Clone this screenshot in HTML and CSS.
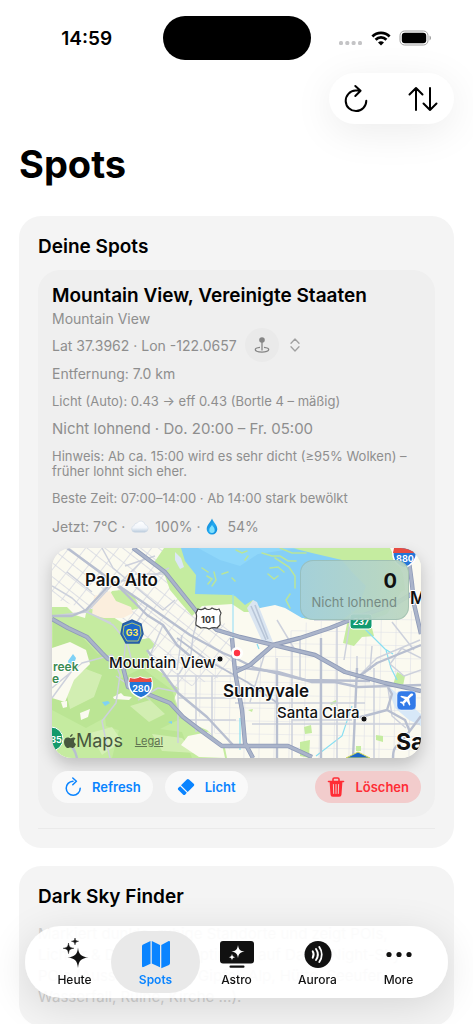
FILE: index.html
```html
<!DOCTYPE html>
<html lang="de">
<head>
    <meta charset="UTF-8">
    <meta name="viewport" content="width=device-width, initial-scale=1.0">
    <title>Spots</title>
    <link rel="stylesheet" href="styles.css">
</head>
<body>
    <div class="app">
        <header class="statusbar">
            <div class="clock">14:59</div>
            <div class="island"></div>
            <div class="status-icons">
                <svg class="signal" viewBox="0 0 24 6" width="24" height="6" fill="#c4c4c6">
                    <rect x="0" y="1" width="4" height="4" rx="1.500"/>
                    <rect x="6.300" y="1" width="4" height="4" rx="1.500"/>
                    <rect x="12.600" y="1" width="4" height="4" rx="1.500"/>
                    <rect x="19" y="1" width="4" height="4" rx="1.500"/>
                </svg>
                <svg viewBox="0 0 20 15" width="20" height="15" fill="none" stroke="#000" stroke-width="2.8">
                    <path d="M1.4 5.4a12.2 12.2 0 0 1 17.2 0"/>
                    <path d="M4.6 8.7a7.6 7.6 0 0 1 10.8 0"/>
                    <path d="M10 14.6 7 11.6a4.3 4.3 0 0 1 6 0z" fill="#000" stroke="none"/>
                </svg>
                <svg viewBox="0 0 33 16" width="33" height="16">
                    <rect x="1" y="1" width="28" height="14" rx="4.5" fill="none" stroke="#a0a0a0"/>
                    <rect x="2.8" y="2.8" width="24.4" height="10.4" rx="3" fill="#000"/>
                    <path d="M30.5 5.6c2 .8 2 4 0 4.8z" fill="#a0a0a0"/>
                </svg>
            </div>
        </header>

        <div class="toolbar">
            <div class="toolbar-pill">
                <button class="icon-btn" aria-label="Neu laden">
                    <svg viewBox="0 0 28 30" width="28" height="30" class="line">
                        <path d="M13.5 6.5A10.3 10.3 0 1 0 24.3 16.8M13.3 2l5.3 4.7-5.3 5.3M18 6.6h-4.5"/>
                    </svg>
                </button>
                <button class="icon-btn" aria-label="Sortieren">
                    <svg viewBox="0 0 32 26" width="32" height="26" class="line">
                        <path d="M9 24V2M2.500 8.500 9 2l6.500 6.500M23 2v22M16.500 17.500 23 24l6.500-6.500"/>
                    </svg>
                </button>
            </div>
        </div>

        <h1>Spots</h1>

        <main>
            <section class="card">
                <h2>Deine Spots</h2>
                <article class="spot">
                    <h3>Mountain View, Vereinigte Staaten</h3>
                    <p class="place">Mountain View</p>
                    <div class="coords">
                        <span>Lat 37.3962 · Lon -122.0657</span>
                        <button class="pin-btn" aria-label="Karte wählen">
                            <span class="pin-circle">
                                <svg viewBox="0 0 16 18" width="16" height="18" fill="none" stroke="#858585" stroke-width="1.300">
                                    <circle cx="8" cy="4" r="2.800" fill="#858585" stroke="none"/>
                                    <path d="M8 6v8.500"/>
                                    <path d="M6 11.300c-3 .3-4.700 1.200-4.700 2.300 0 1.500 3 2.500 6.700 2.500s6.700-1 6.700-2.500c0-1.100-1.700-2-4.700-2.300"/>
                                </svg>
                            </span>
                            <svg viewBox="0 0 10 14" width="10" height="14" fill="none" stroke="#a0a0a0" stroke-width="1.300" stroke-linecap="round" stroke-linejoin="round">
                                <path d="M1 5.200 5 1l4 4.200M1 8.800 5 13l4-4.200"/>
                            </svg>
                        </button>
                    </div>
                    <p class="distance">Entfernung: 7.0 km</p>
                    <p class="small">Licht (Auto): 0.43 → eff 0.43 (Bortle 4 – mäßig)</p>
                    <p class="rating">Nicht lohnend · Do. 20:00 – Fr. 05:00</p>
                    <p class="small">Hinweis: Ab ca. 15:00 wird es sehr dicht (≥95% Wolken) – früher lohnt sich eher.</p>
                    <p class="small">Beste Zeit: 07:00–14:00 · Ab 14:00 stark bewölkt</p>
                    <p class="now">
                        <span>Jetzt: 7°C ·</span>
                        <svg viewBox="0 0 18 13" width="18" height="13">
                            <defs>
                                <linearGradient id="cloud" x1="0" y1="0" x2="0" y2="1">
                                    <stop offset="0" stop-color="#fff"/>
                                    <stop offset=".6" stop-color="#f1f5fa"/>
                                    <stop offset="1" stop-color="#b9cadc"/>
                                </linearGradient>
                            </defs>
                            <path d="M4 12.300a3.400 3.400 0 0 1-.8-6.700A3 3 0 0 1 6.200 3 4.300 4.300 0 0 1 14 4.600a3.900 3.900 0 0 1-.4 7.700z" fill="url(#cloud)" stroke="#c9d5e2" stroke-width=".5"/>
                        </svg>
                        <span>100% ·</span>
                        <svg class="drop" viewBox="0 0 12 17" width="12" height="17">
                            <defs>
                                <linearGradient id="drop" x1="0" y1="0" x2="1" y2="1">
                                    <stop offset="0" stop-color="#0a76c4"/>
                                    <stop offset=".5" stop-color="#22aaf2"/>
                                    <stop offset="1" stop-color="#0c86d6"/>
                                </linearGradient>
                            </defs>
                            <path d="M6 .5c1.500 4 5.300 6.500 5.300 10.700A5.300 5.300 0 0 1 .7 11.200C.7 7 4.500 4.500 6 .5z" fill="url(#drop)"/>
                            <path d="M6 7c1.500 2.200 2.700 3 2.700 5.200a2.700 2.700 0 0 1-5.400 0C3.300 10 4.500 9.200 6 7z" fill="#7fe0fd"/>
                        </svg>
                        <span>54%</span>
                    </p>

                    <div class="map">
                        <svg class="map-canvas" viewBox="0 0 369 210" preserveAspectRatio="xMidYMid slice">
                            <defs>
                                <pattern id="grid-diag" width="13" height="11" patternUnits="userSpaceOnUse" patternTransform="rotate(38)">
                                    <path d="M0 0H13M0 0V11" stroke="#d3d6e1" stroke-width="1.400" fill="none"/>
                                </pattern>
                                <pattern id="grid" width="15" height="13" patternUnits="userSpaceOnUse" patternTransform="rotate(1)">
                                    <path d="M0 0H15M0 0V13" stroke="#dddfe7" stroke-width="1.200" fill="none"/>
                                </pattern>
                            </defs>
                            <rect width="369" height="210" fill="#fbfaf0"/>
                            <path d="M0 0H110L183 88V125L126 142 90 100 30 60 0 50z" fill="url(#grid-diag)"/>
                            <path d="M110 100 183 122 250 75 369 62V210H185L126 145z" fill="url(#grid)"/>

                            <!-- parks and marsh -->
                            <g fill="#c5eca0">
                                <path d="M112 0h257v8l-8 30-12 6-14 22-22 8-60-3-22-15-20 2-9 6-10 0-12-8-30 2-10 10-12-14-10-12-5-14-12-12z"/>
                                <path d="M0 59l15 0 8 8 10 3 2-10 18 4 16 10 9 9 8 9 11-2 7 8-9 5 6 16 12 8 5 9 9 4-5 11 5 14 16 12 12 5 18 18 2 10H0z"/>
                                <path d="M60 43l10-1 12 6 6 12-12 3-14-8-6-6z"/>
                                <path d="M296 70l12 6 12 4 2 8-12 1-8 9-11-3 3-14z"/>
                                <path d="M345 124l8 4-2 10-10-1zM252 179l7-2 1 8-7 1zM248 194l10-2-1 18-9-2zM324 187l7 1 0 6-7-2zM304 198l5 0v5h-5z"/>
                                <path d="M278 155l6-3 1 3-6 2zM196 162l5-1-1 3z"/>
                            </g>
                            <path d="M338 0h31v60l-14-4-4-30z" fill="#fbfaf0"/>
                            <g fill="#b4e28d" opacity=".6">
                                <path d="M1 70l30 20 15 16 20 8 4 26-14 28-22 12-34-18zM50 140l40-20 30 22 10 28-40 20-36-12z"/>
                                <path d="M70 170l30 10 30 4 10 26H60z"/>
                            </g>
                            <g fill="#dcf2bf" opacity=".7">
                                <path d="M12 135l22-14 16 6-8 22-24 12zM78 158l20-6 15 14-16 8zM38 185l22-6 10 14-20 14zM100 186l30 4 14 15-34-2z"/>
                            </g>
                            <path d="M0 100l18-6 16 8 4 14-16 16-9 22-13-4z" fill="#fbfaf0"/>
                            <path d="M61 149l8-4 3 3 8 1-3 3-15-1zM28 165l10-4-2 8-7 3zM9 154l6-1 0 6-4 1zM136 188l20-4 14 12 3 14-26-1-18-12z" fill="#fbfaf0"/>
                            <path d="M42 48l16-5 6 10 15 6 2 6-10 5-19 0-12-3z" fill="#fbeedd"/>

                            <!-- bay -->
                            <path d="M129 0l4 13 11 14-1 19 37 1 3 1 10 9 8-5 7 8 15-3 10 3 17 10 40 2 16-12 8-22-14-14-10-12-30-7-20-5z" fill="#85cff7"/>
                            <path d="M146 0h100l-40 6-18 12-20-6z" fill="#8fd7fa"/>
                            <g fill="none" stroke="#b9e59a" stroke-width="1.500" stroke-linecap="round">
                                <path d="M150 20l6 4M162 24l2 8-4 6M170 26l6-2M155 28l5 3-4 5M184 2l6 3 5-2M193 12l3-4M210 5l10 3 8 0 8 5 8 0M223 10l14 9 6 9 0 12M218 20l8-1 6 5M216 26l6 5 4-3M180 30l3 3M238 46l-4 6 4 8M228 0l12 5 14 0"/>
                            </g>
                            <path d="M181 46V90" stroke="#8fdcf7" stroke-width="1"/>
                            <path d="M16 113l5-7 3 4-2 6-5 3zM50 154l6-1 2 2-5 3zM116 174l4-1 0 3z" fill="#7fd2f6"/>
                            <g fill="none" stroke="#88dff2" stroke-width="1.200">
                                <path d="M300 158l-10 30-26 20M188 170l0 32M309 77l24 24 8 5M334 102l5 18 6 12M205 96l2 5"/>
                            </g>

                            <!-- airfields -->
                            <path d="M195 60l6-8 4 2 16 40-11-1z" fill="#dae5f1"/>
                            <path d="M199 58l15 34M203 57l13 34" stroke="#b9c6d8" stroke-width="1.600"/>
                            <path d="M335 137l34 29v12l-12-6-14-12z" fill="#d7e8f8"/>
                            <path d="M123 4l6 6 3 9-4 2-5-9z" fill="#dce7f5"/>

                            <!-- streets -->
                            <g fill="none" stroke="#cdd1dc" stroke-width="1.500" stroke-linejoin="round">
                                <path d="M0 38l20 12 15 14 26 13 14 17 4 16M35 64l26-28M0 68l35-4 24 11M15 24l25 20M28 10l32 24M61 34l36-4 20-10"/>
                                <path d="M50 0l11 20 50 42 12-10M95 8l-30 30M73 18l30-10M83 26l30 0M96 57l-22 34-2 20M111 77l-12 28M130 87l-5 35M147 68l-6 20-2 18-12 20"/>
                                <path d="M0 140l30-25 30-8 8 20-4 28-14 18 4 20 4 17M22 120l-22 30M86 152l20-12 20 4M64 128l34 24"/>
                                <path d="M126 125v70M144 128v56M160 128v64M110 128h74M126 150h58M132 172h52"/>
                                <path d="M225 110v100M212 108l-14 46M240 98v112M248 90v40M285 76v134M322 120v90M336 140l4 28 14 12M200 176h168M183 155h130M240 172h60M305 108v20M262 72h30M225 72l18 30"/>
                                <path d="M305 130l20-20 43-18M320 98l-2 24M350 100l-12 16 14 12 17-6M340 74l22 28M369 110l-20-10M300 62l-8 50"/>
                            </g>
                            <g fill="none" stroke="#b8bfd0" stroke-width="2.400" stroke-linejoin="round">
                                <path d="M15 0l33 24 20 16 27 27 16 10 14 20 26 22"/>
                                <path d="M61 34l34 23 43 30 33 18 12 5 20 10 50 12 65 1"/>
                                <path d="M95 102l31 43 29 24 26 28"/>
                                <path d="M125 90l30 22 40 22 32 22" stroke-width="1.800"/>
                                <path d="M183 119l43 5 34 10h23l23 5 63-2M269 90v120M305 120l-4 90M225 124v86M305 170l30-8 5-16-7-12M335 162l18 10 5 12M341 210c0-14 6-12 10-18l18-24M305 130l20-15 44-18"/>
                                <path d="M0 68l20 0 14-6 26-28M16 196c6 2 8 10 9 14"/>
                            </g>
                            <g fill="none" stroke="#8f9bb8" stroke-width="4.400" stroke-linejoin="round">
                                <path d="M81 0l32 24 32 40 20 18 23 7 75 18 30 17 40 11 36 8"/>
                                <path d="M183 124l15-7 23-20 27-7 30-10 25-10 40-14 20-12"/>
                                <path d="M180 90l3 34 7 38 3 33 8 15"/>
                                <path d="M0 71l16 9 19 9 15 16 6 6 14 4 6 24 22 8 20 8 13 14 17 13 22 16h66l24 11"/>
                                <path d="M356 6l4 30 2 20 7 30"/>
                            </g>
                            <g fill="none" stroke="#aab4ca" stroke-width="2.800" stroke-linejoin="round">
                                <path d="M81 0l32 24 32 40 20 18 23 7 75 18 30 17 40 11 36 8"/>
                                <path d="M183 124l15-7 23-20 27-7 30-10 25-10 40-14 20-12"/>
                                <path d="M180 90l3 34 7 38 3 33 8 15"/>
                                <path d="M0 71l16 9 19 9 15 16 6 6 14 4 6 24 22 8 20 8 13 14 17 13 22 16h66l24 11"/>
                                <path d="M356 6l4 30 2 20 7 30"/>
                            </g>

                            <!-- route shields -->
                            <g class="shield">
                                <path d="M146 61c3 1 5 1 7-1 2 2 5 2 7 0 3 2 5 2 7 1l2 4c-3 5 0 8-1 12l-3 3c-4-1-6 0-8 1-2-1-4-2-8-1l-5-3c-1-4 2-7 0-12z" fill="#fff" stroke="#444" stroke-width="1.200"/>
                                <text x="156" y="75" fill="#333">101</text>
                                <path d="M71 76l9-4 9 4 2 10-4 9H74l-5-9z" fill="#1d68c8" stroke="#2a5d9e" stroke-width="1.500"/>
                                <path d="M72 78l8-3 8 3 1 8-3 7H75l-4-7z" fill="none" stroke="#d9dc57" stroke-width=".8"/>
                                <text x="80" y="88" fill="#ffe95a">G3</text>
                                <path d="M78 130c4 1 7 1 10-1 4 2 7 2 11 1 3 8 1 16-10 20-11-4-14-12-11-20z" fill="#2375d8" stroke="#fff" stroke-width="1.500"/>
                                <path d="M78 130c4 1 7 1 10-1 4 2 7 2 11 1l1 4H77z" fill="#e64b42"/>
                                <text x="89" y="144" fill="#fff">280</text>
                                <path d="M342 0c5 1 8 0 10-1 4 1 8 2 12 1 2 9-1 16-12 20-10-4-13-12-10-20z" fill="#2375d8" stroke="#fff" stroke-width="1.500"/>
                                <path d="M342 0h22l1 5h-24z" fill="#e64b42"/>
                                <text x="353" y="14" fill="#fff">880</text>
                                <rect x="298" y="66" width="22" height="15" rx="3" fill="#109a70" stroke="#fff"/>
                                <text x="309" y="77" fill="#fff">237</text>
                                <circle cx="-1" cy="191" r="12" fill="#14996b" stroke="#fff"/>
                                <text x="4" y="195" fill="#fff">85</text>
                                <path d="M294 210l12-6 12 6z" fill="#1d68c8" stroke="#d9dc57"/>
                            </g>
                            <rect x="345" y="143" width="19" height="19" rx="4" fill="#337be8" stroke="#fff" stroke-width=".5"/>
                            <path d="M361 146c-1-1-2.500-.3-3.500.8l-2.200 2.200-6-1.300-1 1 4.600 2.600-2.300 2.500-2-.2-.7.800 2.400 1.400 1.400 2.400.8-.7-.2-2 2.500-2.300 2.600 4.600 1-1-1.300-6 2.200-2.200c1.100-1 2.700-1.600 1.700-2.600z" fill="#fff"/>

                            <!-- town labels -->
                            <g class="towns">
                                <text x="33" y="38" class="town-lg">Palo Alto</text>
                                <text x="171" y="149" class="town-lg">Sunnyvale</text>
                                <text x="57" y="120">Mountain View</text>
                                <text x="225" y="170">Santa Clara</text>
                                <text x="344" y="202" class="town-xl">Sa</text>
                                <text x="358" y="56" class="town-lg">M</text>
                                <text x="1" y="123" class="park">reek</text>
                                <text x="0" y="135" class="park">e</text>
                            </g>
                            <circle cx="168" cy="111" r="3" fill="#111" stroke="#fff" stroke-width=".8"/>
                            <circle cx="312" cy="171" r="3" fill="#111" stroke="#fff" stroke-width=".8"/>
                            <circle cx="185" cy="105" r="6" fill="#fff"/>
                            <circle cx="185" cy="105" r="3.200" fill="#ff3343"/>
                        </svg>
                        <div class="score">
                            <strong>0</strong>
                            <span>Nicht lohnend</span>
                        </div>
                        <div class="attribution">
                            <svg viewBox="0 0 12 14" width="12" height="14" fill="#47573e">
                                <path d="M8.700 0c.1 1.600-1.200 3-2.700 3C5.900 1.500 7.200.2 8.700 0zM11.500 4.800C9.300 6.200 9.700 9 12 10c-.6 1.700-1.900 4-3.200 4-1 0-1.300-.6-2.500-.6S4.700 14 3.800 14C2 14 0 10.700 0 7.900 0 5 1.800 3.500 3.600 3.500c1.200 0 1.900.7 2.800.7.800 0 1.600-.8 3-.8.800 0 1.700.5 2.100 1.400z"/>
                            </svg>
                            <span>Maps</span>
                            <a href="#legal">Legal</a>
                        </div>
                    </div>

                    <div class="actions">
                        <button class="pill">
                            <svg viewBox="0 0 18 20" width="18" height="20" fill="none" stroke="currentColor" stroke-width="1.500" stroke-linecap="round" stroke-linejoin="round">
                                <path d="M9 4.200a7 7 0 1 0 7.200 7M8.800 1l3.600 3.200-3.600 3.500"/>
                            </svg>
                            Refresh
                        </button>
                        <button class="pill">
                            <svg viewBox="0 0 18 18" width="18" height="18" fill="currentColor">
                                <path d="M9.800 1.400c.7-.7 1.500-.7 2.200 0l4.700 4.300c.7.700.7 1.500 0 2.200L10.700 14 4 7.300zM3.200 8.200l6.600 6.600-1.500 1.600c-.7.700-1.600.7-2.300 0L1.400 12c-.7-.7-.7-1.600 0-2.300z"/>
                            </svg>
                            Licht
                        </button>
                        <button class="pill pill-danger">
                            <svg viewBox="0 0 18 20" width="18" height="20" fill="none" stroke="currentColor" stroke-width="1.600" stroke-linecap="round" stroke-linejoin="round">
                                <path d="M1.500 4.500h15M6 4V2.300C6 1.500 6.500 1 7.300 1h3.400c.8 0 1.300.5 1.300 1.300V4"/>
                                <path fill="currentColor" d="M3.400 5l.9 12.500c0 .9.600 1.500 1.500 1.500h6.400c.9 0 1.500-.6 1.500-1.500L14.600 5z"/>
                                <path stroke="#f2cccc" stroke-width="1" d="M6.400 7.500l.3 9M9 7.500v9M11.600 7.500l-.3 9"/>
                            </svg>
                            Löschen
                        </button>
                    </div>
                </article>
                <hr>
            </section>

            <section class="card">
                <h2>Dark Sky Finder</h2>
                <p class="finder-text">Markiert dunkle, ruhige Standorte und zeigt POIs, Lichter &amp; Dunkelheit. Optimiert auf Dark-/Night-Sky-POIs (Aussichtspunkt, Gipfel, Alp, Hütte, Seeufer, Wasserfall, Ruine, Kirche …).</p>
            </section>
        </main>

        <nav class="tabbar">
            <a class="tab" href="#heute">
                <svg viewBox="0 0 28 32" width="28" height="32" fill="currentColor">
                    <path d="M17 10.500c.8 7 3 9.200 10.500 10-7.500.8-9.700 3-10.500 10.500-.8-7.500-3-9.700-10.500-10.500 7.500-.8 9.700-3 10.500-10z"/>
                    <path d="M7.500 6c.5 3.800 1.500 4.800 5.300 5.300-3.800.5-4.800 1.500-5.300 5.300-.5-3.800-1.500-4.800-5.300-5.300C6 10.800 7 9.800 7.500 6zM14 1c.3 2.300 1 3 3.500 3.300-2.500.4-3.200 1-3.500 3.500-.3-2.500-1-3.100-3.500-3.500C13 4 13.700 3.300 14 1z" stroke="currentColor" stroke-width=".5"/>
                </svg>
                Heute
            </a>
            <a class="tab active" href="#spots">
                <svg viewBox="0 0 28 32" width="28" height="32" fill="currentColor">
                    <path d="M0 9.500C0 8.500.4 8 1.200 7.600L8.500 4v22.700L1.500 30c-.9.400-1.500 0-1.500-1zM9.800 4l8.200 4v22.200l-8.200-3.600zM19.300 8l7-3.800c1-.5 1.700-.2 1.700.9v21c0 .9-.3 1.400-1 1.800l-7.700 3.300z"/>
                </svg>
                Spots
            </a>
            <a class="tab" href="#astro">
                <svg viewBox="0 0 34 32" width="34" height="32">
                    <rect x="0" y="4" width="34" height="22.500" rx="3" fill="currentColor"/>
                    <rect x="9.500" y="28.500" width="15" height="2.200" rx="1" fill="currentColor"/>
                    <path d="M18 8c.7 4.500 2 5.900 6.700 6.600-4.700.7-6 2.100-6.700 6.700-.7-4.600-2-6-6.700-6.700C16 13.900 17.300 12.500 18 8zM12 16.800c.4 2.500 1 3 3.300 3.400-2.300.4-2.900 1-3.300 3.300-.4-2.300-1-2.900-3.300-3.300 2.300-.4 2.900-.9 3.300-3.400z" fill="#fff"/>
                </svg>
                Astro
            </a>
            <a class="tab" href="#aurora">
                <svg viewBox="0 0 28 32" width="28" height="32">
                    <circle cx="14" cy="17.500" r="13.500" fill="currentColor"/>
                    <path d="M8.700 14.300c1.200 2 1.200 4.400 0 6.400M12 12c2.300 3.400 2.300 7.600 0 11M15.300 10c3.200 4.500 3.200 10.500 0 15" fill="none" stroke="#fff" stroke-width="1.900" stroke-linecap="round"/>
                </svg>
                Aurora
            </a>
            <a class="tab" href="#more">
                <svg viewBox="0 0 28 32" width="28" height="32" fill="currentColor">
                    <circle cx="4" cy="17.500" r="2.600"/>
                    <circle cx="14" cy="17.500" r="2.600"/>
                    <circle cx="24" cy="17.500" r="2.600"/>
                </svg>
                More
            </a>
        </nav>
    </div>
</body>
</html>
```
FILE: styles.css
```css
* {
    margin: 0;
    padding: 0;
    box-sizing: border-box;
}

body {
    font-family: Inter, "Liberation Sans", sans-serif;
    background: #fff;
    color: #000;
}

button {
    font: inherit;
    border: none;
    background: none;
    cursor: pointer;
}

svg {
    display: block;
    flex-shrink: 0;
}

.app {
    height: 100vh;
    overflow: hidden auto;
    scrollbar-width: none;
    padding: 0 19px;
}

/* status bar */
.statusbar {
    display: grid;
    grid-template-columns: 1fr 148px 1fr;
    align-items: center;
    padding-top: 16px;
}

.clock {
    padding-right: 8px;
    font-size: 19px;
    font-weight: 600;
    text-align: center;
}

.island {
    height: 44px;
    border-radius: 22px;
    background: #000;
}

.status-icons {
    display: flex;
    justify-content: center;
    align-items: center;
    gap: 8px;
    padding-left: 6px;
}

.signal {
    margin-top: 10px;
}

/* toolbar */
.toolbar {
    display: flex;
    justify-content: flex-end;
    margin-top: 13px;
}

.toolbar-pill {
    display: flex;
    justify-content: space-between;
    align-items: center;
    width: 125px;
    height: 51px;
    padding: 0 15px 0 13px;
    border-radius: 26px;
    background: #fff;
    box-shadow: 0 8px 40px rgba(0, 0, 0, 0.08);
}

.line {
    fill: none;
    stroke: #000;
    stroke-width: 2;
    stroke-linecap: round;
    stroke-linejoin: round;
}

h1 {
    font-size: 38px;
    line-height: 48px;
    margin: 16px 0 28px;
}

h2,
h3 {
    font-size: 19px;
    line-height: 24px;
    font-weight: 600;
}

/* cards */
main {
    display: flex;
    flex-direction: column;
    gap: 18px;
}

.card {
    padding: 19px;
    border-radius: 22px;
    background: #f4f4f4;
}

.spot {
    display: flex;
    flex-direction: column;
    gap: 12px;
    margin-top: 11px;
    padding: 14px;
    border-radius: 22px;
    background: #efefef;
    color: #8e8e8e;
}

.spot h3 {
    color: #000;
}

.spot p {
    line-height: 16px;
}

.place,
.distance,
.coords,
.now {
    font-size: 14px;
}

.spot .place {
    margin-top: -9px;
}

/* the round button is taller than the text row */
.coords {
    display: flex;
    align-items: center;
    gap: 8px;
    margin: -11px 0 -8px;
}

.pin-btn {
    display: flex;
    align-items: center;
    gap: 11px;
}

.pin-circle {
    display: flex;
    justify-content: center;
    align-items: center;
    width: 34px;
    height: 34px;
    border-radius: 50%;
    background: #eaeaea;
}

.spot .small {
    font-size: 13px;
    line-height: 15px;
}

.rating {
    font-size: 15px;
}

.now {
    display: flex;
    align-items: center;
    gap: 6px;
}

.drop {
    margin-right: 3px;
}

/* map */
.map {
    position: relative;
    aspect-ratio: 369 / 210;
    margin: 1px 0;
    border-radius: 20px;
    overflow: hidden;
    color: #111;
    box-shadow: 0 7px 16px rgba(0, 0, 0, 0.2);
}

.map-canvas {
    width: 100%;
    height: 100%;
}

.towns {
    font-size: 15px;
    font-weight: 500;
    fill: #111;
    stroke: #fff;
    stroke-width: 2px;
    paint-order: stroke;
}

.town-lg {
    font-size: 17px;
    font-weight: 600;
}

.town-xl {
    font-size: 23px;
    font-weight: 700;
}

.park {
    font-size: 12px;
    font-weight: 600;
    fill: #3a8a50;
}

.shield {
    font-size: 9px;
    font-weight: 700;
    text-anchor: middle;
}

.score {
    position: absolute;
    top: 12px;
    right: 12px;
    display: flex;
    flex-direction: column;
    align-items: flex-end;
    padding: 9px 12px;
    border-radius: 13px;
    background: linear-gradient(90deg, rgba(166, 208, 215, 0.94), rgba(187, 214, 192, 0.94));
    box-shadow: inset 0 0 0 1px rgba(130, 165, 155, 0.4);
}

.score strong {
    font-size: 20px;
    line-height: 24px;
}

.score span {
    font-size: 13px;
    line-height: 18px;
    color: #758a84;
}

.attribution {
    position: absolute;
    left: 12px;
    bottom: 7px;
    display: flex;
    align-items: center;
    font-size: 18px;
    color: #47573e;
}

.attribution a {
    margin-left: 12px;
    font-size: 11px;
    color: #5f7350;
}

/* actions */
.actions {
    display: flex;
    gap: 12px;
}

.pill {
    position: relative;
    display: flex;
    align-items: center;
    gap: 10px;
    height: 32px;
    padding: 0 12px;
    border-radius: 16px;
    background: #f9f9f9;
    color: #0a84ff;
    font-size: 13px;
    font-weight: 600;
}

.pill-danger {
    margin-left: auto;
    background: #f2cccc;
    color: #ff2d35;
}

hr {
    margin-top: 11px;
    border: none;
    border-top: 1px solid #eaeaea;
}

.finder-text {
    margin-top: 14px;
    font-size: 15px;
    line-height: 21px;
    color: #cfcfcf;
}

/* tab bar */
.tabbar {
    position: fixed;
    left: 25px;
    right: 25px;
    bottom: 26px;
    display: flex;
    height: 72px;
    padding: 5px 9px;
    border-radius: 36px;
    background: rgba(255, 255, 255, 0.92);
    box-shadow: 0 8px 40px rgba(0, 0, 0, 0.12);
}

.tab {
    position: relative;
    flex: 1;
    display: flex;
    flex-direction: column;
    align-items: center;
    gap: 4px;
    padding-top: 6px;
    font-size: 12px;
    line-height: 14px;
    font-weight: 500;
    color: #111;
    text-decoration: none;
}

.active {
    color: #0a84ff;
    font-weight: 600;
}

/* highlight reaches a little past its own tab */
.active::before {
    content: "";
    position: absolute;
    inset: 0 -4px;
    z-index: -1;
    border-radius: 32px;
    background: #e9e9e9;
}
```
